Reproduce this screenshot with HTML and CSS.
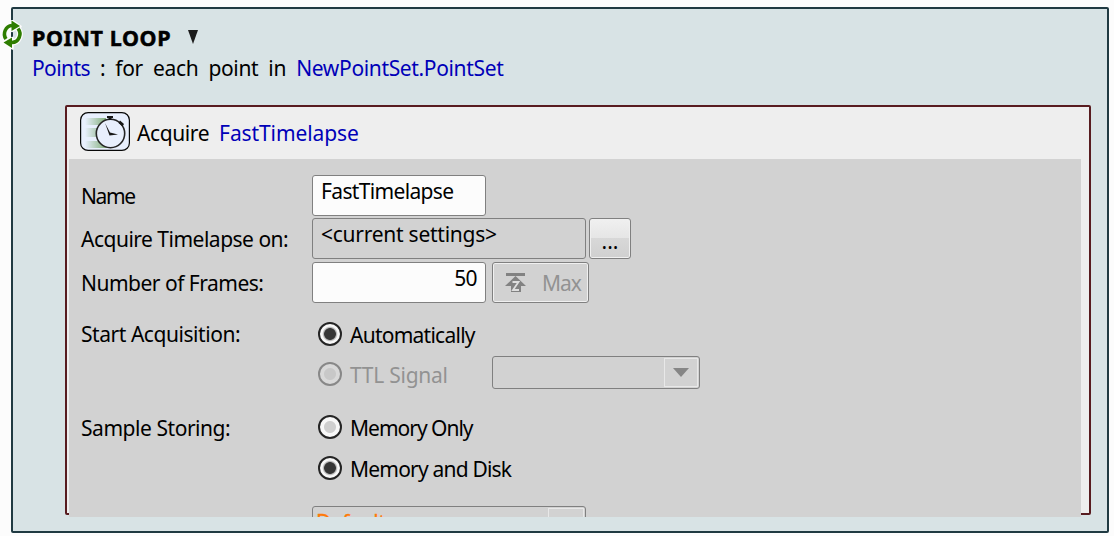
FILE: index.html
```html
<!DOCTYPE html>
<html lang="en">
<head>
<meta charset="utf-8">
<title>Point Loop</title>
<link rel="stylesheet" href="styles.css">
</head>
<body>
<section class="loop">
  <svg class="loop-icon" width="24" height="30" viewBox="0 0 24 30">
    <g stroke="#fcfcfc" stroke-linejoin="round" fill="#fcfcfc"><path stroke-width="2.500" d="M11 .5 19.500 6.500 11 11zM11.500 18v10.500L3 22z"/><path fill="none" stroke-width="6" d="M11 5.500A8 8.500 0 0 0 5 19M11 22.500A8 8.500 0 0 0 17 8.500"/></g>
    <path fill="#2e7d00" d="M10.500 .5 19 6 10.500 11zM11 17.500v10.500L2.500 22.500z"/>
    <path fill="none" stroke="#2e7d00" stroke-width="3.600" d="M11 5.500A8 8.500 0 0 0 5 19M11 22.500A8 8.500 0 0 0 17 8.500"/>
  </svg>
  <header class="loop-head">
    <div class="title"><b class="t-loop">POINT LOOP</b><svg class="caret" width="10" height="14" viewBox="0 0 10 14"><path fill="#1c1c1c" d="M0 0h10L5 14z"/></svg></div>
    <div class="desc"><span class="link t-points">Points</span> : for each point in <span class="link">NewPointSet.PointSet</span></div>
  </header>
  <article class="task">
    <header class="task-head">
      <svg width="50" height="39" viewBox="0 0 50 39">
        <defs><linearGradient id="trail"><stop offset="0" stop-color="#79a86f" stop-opacity="0"/><stop offset="1" stop-color="#79a86f"/></linearGradient></defs>
        <rect x=".6" y=".6" width="48.800" height="37.800" rx="7.500" fill="#e8effd" stroke="#080808" stroke-width="1.200"/>
        <path fill="url(#trail)" d="M5 6h21v7H5zM5 16h18v9H5zM5 29h23v7H5z"/>
        <circle cx="30.500" cy="21.500" r="14.200" fill="#e8effd" stroke="#252525" stroke-width="1.600"/>
        <path fill="#161616" d="M27 4h6v2h-1.500v2h-3V6H27zM40 8.500l4 3.500-1.500 2.500-4-3.500zM25 11l5 9.500 8 2-8.500 1z"/>
      </svg>
      <span class="t-acquire">Acquire</span><span class="link t-task">FastTimelapse</span>
    </header>
    <div class="panel">
      <div class="row"><label class="t-name">Name</label><div class="field input short"><span class="t-fast">FastTimelapse</span></div></div>
      <div class="row row-on"><label class="t-on">Acquire Timelapse on:</label><div class="field long"><span class="t-cur">&lt;current settings&gt;</span></div><button class="btn more">...</button></div>
      <div class="row row-frames"><label class="t-frames">Number of Frames:</label><div class="field input short num"><span class="t-num">50</span></div>
        <button class="btn max" disabled><svg width="22" height="20" viewBox="0 0 22 20"><path fill="#828282" d="M1 0h19v3H1zM10.500 3 21 13h-5v6H6v-6H0z"/><path fill="none" stroke="#dedede" stroke-width="1.800" d="M7.500 9h6L8 17h6"/></svg><span class="t-max">Max</span></button></div>
      <div class="row row-start"><label class="t-start">Start Acquisition:</label><i class="radio on"></i><span class="option t-auto">Automatically</span></div>
      <div class="row row-ttl"><label></label><i class="radio off"></i><span class="option dim t-ttl">TTL Signal</span><div class="combo combo-ttl"><div class="drop"><svg width="16" height="9" viewBox="0 0 16 9"><path fill="#868686" d="M0 0h16L8 9z"/></svg></div></div></div>
      <div class="row row-sample"><label class="t-sample">Sample Storing:</label><i class="radio"></i><span class="option t-mem">Memory Only</span></div>
      <div class="row row-disk"><label></label><i class="radio on"></i><span class="option t-disk">Memory and Disk</span></div>
      <div class="row row-default"><label></label><div class="combo combo-default"><span class="t-def">Default</span><div class="drop"></div></div></div>
    </div>
  </article>
</section>
</body>
</html>
```
FILE: styles.css
```css
* { box-sizing: border-box; }
body { margin: 0; padding: 7px 5px 0 11px; height: 536px; overflow: hidden; background: #fcfcfc; color: #000; font: 21px/24px "Noto Sans", sans-serif; }
.loop { position: relative; width: 1098px; height: 526px; padding: 17px 16px 0 52px; background: #d8e3e5; border: 2px solid #203a42; border-radius: 2px; }
.loop-icon { position: absolute; left: -12px; top: 11px; }
.loop-head { height: 79px; margin-left: -33px; white-space: nowrap; }
.title { display: flex; height: 30px; }
.t-loop { font-size: 21.5px; letter-spacing: .6px; -webkit-text-stroke: .5px #000; }
.caret { margin: 4px 0 0 17px; }
.desc { word-spacing: 5px; letter-spacing: -.35px; }
.t-points { letter-spacing: -.6px; }
.link { color: #0000b8; }
.task { width: 1026px; height: 410px; background: #eee; border: 2px solid #581c20; border-radius: 2px; }
.task-head { display: flex; height: 52px; padding: 5px 0 0 13px; }
.task-head span { margin-top: 9px; }
.t-acquire { margin-left: 7px; letter-spacing: -.4px; }
.task-head .t-task { margin-left: 10px; letter-spacing: -.1px; }
.panel { width: 1012px; height: 358px; margin-left: 2px; padding: 16px 0 0 12px; overflow: hidden; background: #d2d2d2; }
.row { display: flex; height: 41px; white-space: nowrap; }
.row > label { flex: 0 0 231px; padding-top: 9px; letter-spacing: -.5px; }
.row > .t-name { letter-spacing: -1.4px; }
.t-fast { letter-spacing: -.65px; }
.t-cur { letter-spacing: -.25px; }
.t-num { letter-spacing: -.6px; }
.t-auto { letter-spacing: -.75px; }
.t-ttl { letter-spacing: -.25px; }
.t-mem { letter-spacing: -1px; }
.t-disk { letter-spacing: -.8px; }
.row-on { margin-top: 2px; }
.row-frames { margin-top: 3px; }
.field { height: 41px; padding: 3px 8px; border: 1px solid #808080; border-radius: 3px; }
.input { background: #fcfcfc; }
.short { width: 174px; }
.long { width: 274px; }
.num { text-align: right; }
.btn { height: 41px; padding: 0; border: 1px solid #808080; border-radius: 3px; font: inherit; color: #000; box-shadow: inset 0 0 0 1px #f0f0f0; }
.more { width: 42px; margin-left: 3px; padding-top: 5px; background: linear-gradient(#f0f0f0, #e6e6e6 48%, #d8d8d8 49%, #d0d0d0); }
.max { display: flex; width: 97px; margin-left: 6px; padding: 10px 0 0 12px; background: #d2d2d2; color: #929292; }
.t-max { margin: -2px 0 0 15px; letter-spacing: -1.1px; }
.row-start { height: 24px; margin-top: 19px; }
.row > .t-start { padding-top: 0; letter-spacing: -.45px; }
.row > .t-sample { padding-top: 1px; letter-spacing: -.45px; }
.radio { flex: none; width: 24px; height: 24px; margin: 0 8px 0 6px; border: 2px solid #242424; border-radius: 50%; background: radial-gradient(circle, #cfcfcf 0 5.500px, #f8f8f8 6.500px); }
.radio.on { background: radial-gradient(circle, #363636 0 5.500px, #aaa 6.200px, #f8f8f8 7.800px); }
.radio.off { border-color: #888; background: radial-gradient(circle, #c8c8c8 0 5.500px, #d9d9d9 6.500px); }
.option { margin-top: 1px; }
.dim { color: #929292; }
.row-ttl { height: 33px; margin-top: 10px; }
.row-ttl > .radio { margin-top: 6px; }
.row-ttl > .option { width: 142px; margin-top: 7px; }
.combo { display: flex; border: 1px solid #808080; border-radius: 3px; }
.combo-ttl { width: 208px; height: 33px; }
.drop { width: 34px; height: 29px; margin: 1px 1px 1px auto; border: 1px solid #e8e8e8; padding: 9px 0 0 8px; line-height: 0; }
.row-sample { height: 24px; margin-top: 26px; }
.row-disk { height: 24px; margin-top: 17px; }
.row-default { margin-top: 26px; }
.combo-default { width: 274px; height: 41px; padding-left: 3px; color: #ff7a08; }
.t-def { margin-top: 3px; letter-spacing: -.4px; -webkit-text-stroke: .3px #ff7a08; }
.combo-default .drop { width: 36px; height: 34px; }
```
